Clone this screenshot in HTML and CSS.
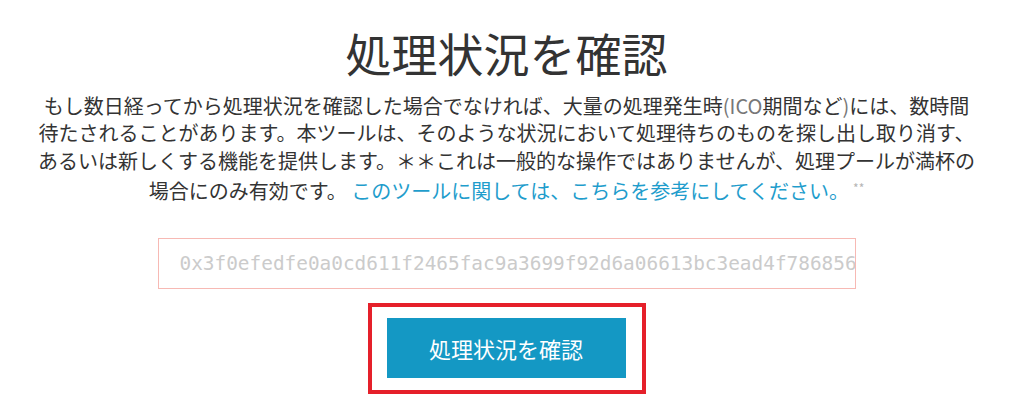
FILE: index.html
```html
<!DOCTYPE html>
<html lang="ja">
<head>
    <meta charset="UTF-8">
    <meta name="viewport" content="width=device-width, initial-scale=1.0">
    <title>処理状況を確認</title>
    <link rel="stylesheet" href="styles.css">
</head>
<body>
    <div class="check-container">
        <h1 class="check-title">処理状況を確認</h1>

        <p class="check-desc">もし数日経ってから処理状況を確認した場合でなければ、大量の処理発生時<span class="latin">(ICO</span>期間など<span class="latin">)</span>には、数時間待たされることがあります。本ツールは、そのような状況において処理待ちのものを探し出し取り消す、あるいは新しくする機能を提供します。＊＊これは一般的な操作ではありませんが、処理プールが満杯の場合にのみ有効です。 <a href="#" class="check-link">このツールに関しては、こちらを参考にしてください。</a><span class="note">**</span></p>

        <form class="check-form">
            <input type="text" class="tx-input" placeholder="0x3f0efedfe0a0cd611f2465fac9a3699f92d6a06613bc3ead4f786856">

            <div class="highlight-box">
                <button type="submit" class="check-button">処理状況を確認</button>
            </div>
        </form>
    </div>
</body>
</html>
```

FILE: styles.css
```css
/* General Styling */
* {
  box-sizing: border-box;
}

body {
  margin: 0;
  background-color: #ffffff;
  color: #333333;
  font-family: "Noto Sans CJK JP", "Noto Sans", sans-serif;
}

/* Container */
.check-container {
  width: 942px;
  margin: 0 auto;
  padding-top: 24px;
  text-align: center;
}

.check-title {
  margin: 0;
  font-size: 46px;
  font-weight: normal;
  line-height: 56px;
  color: #333333;
}

/* Description */
.check-desc {
  margin: 12px 0 0;
  font-size: 20px;
  line-height: 27.4px;
}

.latin {
  color: #777777;
}

.check-link {
  color: #1f9dcc;
  text-decoration: none;
}

.note {
  font-size: 12px;
  color: #b5b5b5;
  vertical-align: 6px;
  margin-left: 4px;
}

/* Form */
.check-form {
  margin-top: 33px;
  display: flex;
  flex-direction: column;
  align-items: center;
}

.tx-input {
  width: 698px;
  height: 51px;
  padding: 0 0 0 21px;
  border: 1px solid #f7b9b4;
  border-radius: 0;
  font-family: "DejaVu Sans Mono", monospace;
  font-size: 19.4px;
  color: #333333;
  outline: none;
}

.tx-input::placeholder {
  color: #cbcbcb;
}

.highlight-box {
  margin-top: 14px;
  padding: 11px 16px 12px 15px;
  border: 4px solid #e5202a;
}

.check-button {
  display: block;
  width: 239px;
  height: 60px;
  border: none;
  background-color: #1498c4;
  color: #ffffff;
  font-family: "Noto Sans CJK JP", sans-serif;
  font-size: 22px;
  cursor: pointer;
}
```
